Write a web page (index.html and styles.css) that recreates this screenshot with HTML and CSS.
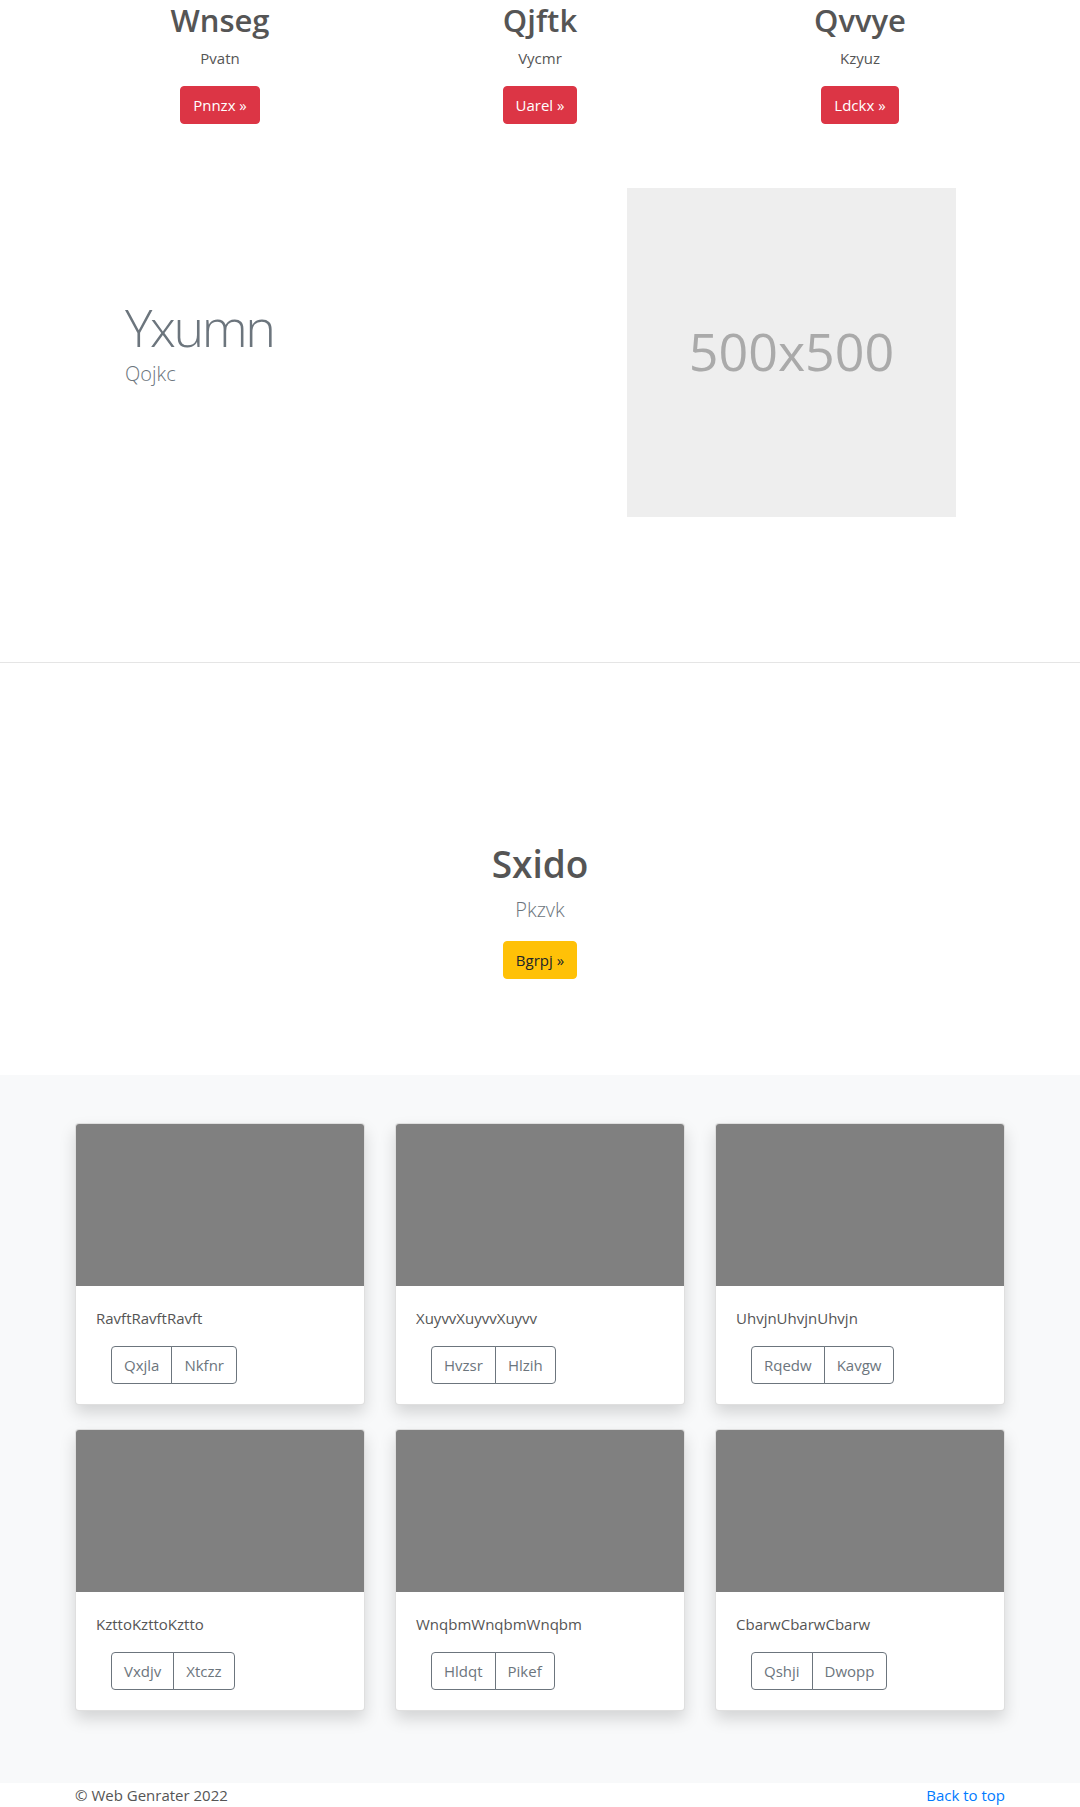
FILE: index.html
```html
<!DOCTYPE html>
<html lang="en">
<head>
<meta charset="utf-8">
<title>Web Genrater</title>
<link rel="stylesheet" href="styles.css">
</head>
<body>
<main>
  <section class="container marketing">
    <div class="market-col">
      <h2 class="market-title">Wnseg</h2>
      <p class="market-text">Pvatn</p>
      <a class="btn btn-danger" href="#">Pnnzx &raquo;</a>
    </div>
    <div class="market-col">
      <h2 class="market-title">Qjftk</h2>
      <p class="market-text">Vycmr</p>
      <a class="btn btn-danger" href="#">Uarel &raquo;</a>
    </div>
    <div class="market-col">
      <h2 class="market-title">Qvvye</h2>
      <p class="market-text">Kzyuz</p>
      <a class="btn btn-danger" href="#">Ldckx &raquo;</a>
    </div>
  </section>

  <section class="container featurette">
    <div class="feat-text">
      <h2 class="feat-heading">Yxumn</h2>
      <p class="feat-lead">Qojkc</p>
    </div>
    <div class="feat-image"><span class="placeholder-label">500x500</span></div>
  </section>

  <hr class="divider">

  <section class="hero">
    <h2 class="hero-title">Sxido</h2>
    <p class="hero-lead">Pkzvk</p>
    <a class="btn btn-warning" href="#">Bgrpj &raquo;</a>
  </section>

  <section class="album">
    <div class="container card-grid">
      <div class="card">
        <div class="card-img"></div>
        <div class="card-body">
          <p class="card-text">RavftRavftRavft</p>
          <div class="btn-group"><button class="btn-outline">Qxjla</button><button class="btn-outline">Nkfnr</button></div>
        </div>
      </div>
      <div class="card">
        <div class="card-img"></div>
        <div class="card-body">
          <p class="card-text">XuyvvXuyvvXuyvv</p>
          <div class="btn-group"><button class="btn-outline">Hvzsr</button><button class="btn-outline">Hlzih</button></div>
        </div>
      </div>
      <div class="card">
        <div class="card-img"></div>
        <div class="card-body">
          <p class="card-text">UhvjnUhvjnUhvjn</p>
          <div class="btn-group"><button class="btn-outline">Rqedw</button><button class="btn-outline">Kavgw</button></div>
        </div>
      </div>
      <div class="card">
        <div class="card-img"></div>
        <div class="card-body">
          <p class="card-text">KzttoKzttoKztto</p>
          <div class="btn-group"><button class="btn-outline">Vxdjv</button><button class="btn-outline">Xtczz</button></div>
        </div>
      </div>
      <div class="card">
        <div class="card-img"></div>
        <div class="card-body">
          <p class="card-text">WnqbmWnqbmWnqbm</p>
          <div class="btn-group"><button class="btn-outline">Hldqt</button><button class="btn-outline">Pikef</button></div>
        </div>
      </div>
      <div class="card">
        <div class="card-img"></div>
        <div class="card-body">
          <p class="card-text">CbarwCbarwCbarw</p>
          <div class="btn-group"><button class="btn-outline">Qshji</button><button class="btn-outline">Dwopp</button></div>
        </div>
      </div>
    </div>
  </section>
</main>

<footer class="footer">
  <div class="container footer-inner">
    <p class="copy">&copy; Web Genrater 2022</p>
    <a class="back-top" href="#">Back to top</a>
  </div>
</footer>
</body>
</html>
```

FILE: styles.css
```css
* { box-sizing: border-box; }

body {
  margin: 0;
  font-family: "Open Sans", "Noto Sans", sans-serif;
  font-size: 16px;
  line-height: 1.5;
  color: #555;
  background: #fff;
}

.container {
  width: 960px;
  margin: 0 auto;
  padding: 0 15px;
}

/* marketing columns */
.marketing {
  display: flex;
  padding: 0;
}
.market-col {
  flex: 1;
  text-align: center;
  padding: 0 15px;
}
.market-title {
  margin: 0 0 7px;
  padding-top: 1px;
  font-size: 31px;
  line-height: 38px;
  font-weight: 600;
  color: #555;
}
.market-text {
  margin: 0 0 16px;
  font-size: 15px;
  line-height: 24px;
}

.btn {
  display: inline-block;
  padding: 6px 12px;
  font-size: 15px;
  line-height: 24px;
  border: 1px solid transparent;
  border-radius: 4px;
  text-decoration: none;
}
.btn-danger {
  background: #dc3545;
  border-color: #dc3545;
  color: #fff;
}
.btn-warning {
  background: #ffc107;
  border-color: #ffc107;
  color: #212529;
}

/* featurette */
.featurette {
  display: flex;
  align-items: center;
  margin-top: 64px;
  padding: 0;
}
.feat-text {
  flex: 1;
  padding-left: 65px;
}
.feat-heading {
  margin: 0;
  font-size: 52px;
  line-height: 1.2;
  font-weight: 300;
  letter-spacing: -2.4px;
  color: #6c757d;
}
.feat-lead {
  margin: 0 0 20px;
  font-size: 20px;
  line-height: 30px;
  font-weight: 300;
  color: #6c757d;
}
.feat-image {
  width: 329px;
  height: 329px;
  margin-right: 64px;
  background: #eee;
  display: flex;
  align-items: center;
  justify-content: center;
}
.placeholder-label {
  font-size: 52px;
  color: #aaa;
  line-height: 1;
  padding-bottom: 4px;
}

.divider {
  margin: 145px 0 0;
  border: 0;
  border-top: 1px solid rgba(0, 0, 0, 0.1);
  height: 0;
}

/* hero */
.hero {
  text-align: center;
  padding: 180px 0 96px;
}
.hero-title {
  margin: 0 0 11px;
  font-size: 37px;
  line-height: 41px;
  font-weight: 600;
  color: #555;
}
.hero-lead {
  margin: 0 0 16px;
  font-size: 20px;
  line-height: 30px;
  font-weight: 300;
  color: #6c757d;
}

/* album */
.album {
  background: #f8f9fa;
  padding: 48px 0;
}
.card-grid {
  display: grid;
  grid-template-columns: repeat(3, 1fr);
  column-gap: 30px;
  row-gap: 24px;
  padding-bottom: 24px;
}
.card {
  background: #fff;
  border: 1px solid rgba(0, 0, 0, 0.125);
  border-radius: 4px;
  overflow: hidden;
  box-shadow: 0 8px 16px rgba(0, 0, 0, 0.15);
}
.card-img {
  height: 162px;
  background: #808080;
}
.card-body {
  padding: 20px;
}
.card-text {
  margin: 0 0 16px;
  font-size: 15px;
  line-height: 24px;
  color: #555;
}
.btn-group {
  display: inline-flex;
  margin-left: 15px;
}
.btn-outline {
  font-family: inherit;
  font-size: 15px;
  line-height: 24px;
  padding: 6px 12px;
  background: transparent;
  color: #6c757d;
  border: 1px solid #6c757d;
  border-radius: 0;
}
.btn-outline:first-child {
  border-radius: 4px 0 0 4px;
}
.btn-outline + .btn-outline {
  margin-left: -1px;
  border-radius: 0 4px 4px 0;
}

/* footer */
.footer-inner {
  display: flex;
  justify-content: space-between;
}
.copy {
  margin: 0;
  line-height: 24px;
  font-size: 15px;
  color: #555;
}
.back-top {
  line-height: 24px;
  font-size: 15px;
  color: #007bff;
  text-decoration: none;
}
```
